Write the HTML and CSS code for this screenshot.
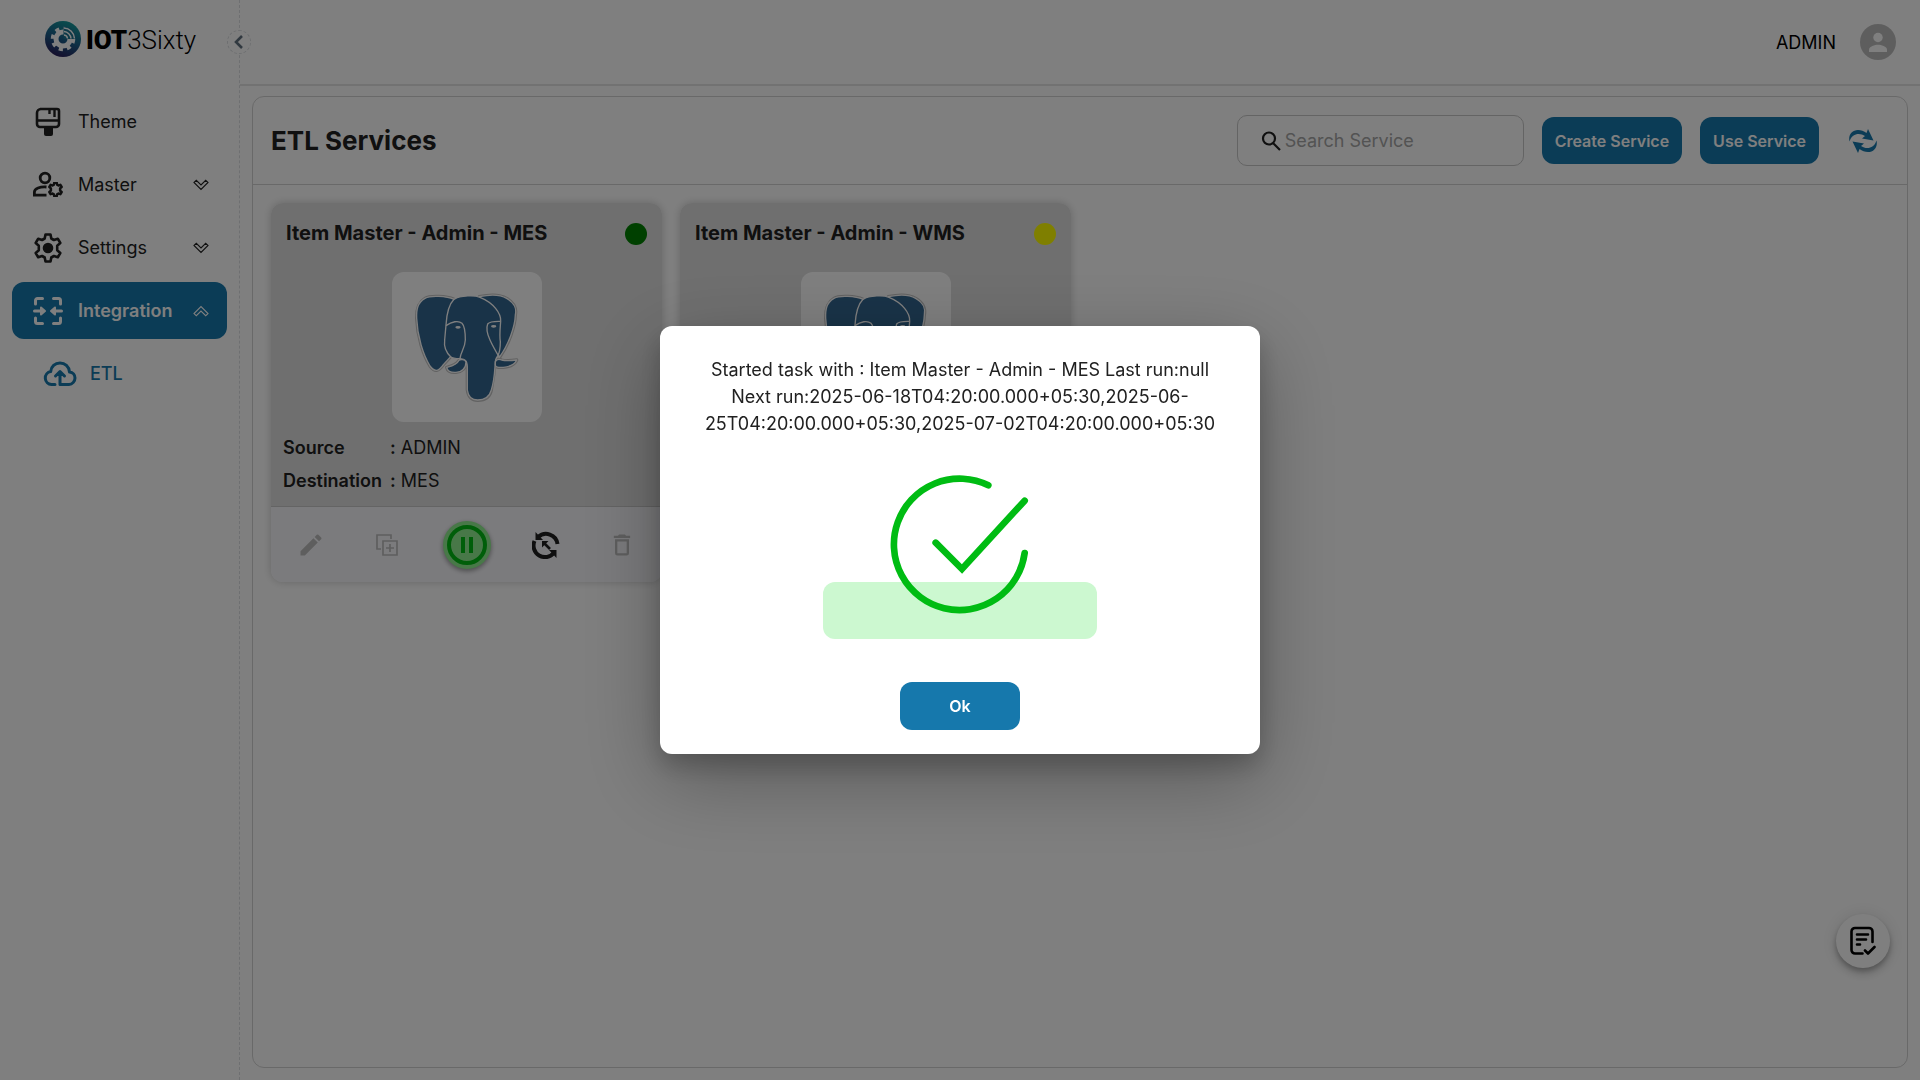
FILE: index.html
```html
<!DOCTYPE html>
<html lang="en">
  <head>
    <meta charset="utf-8">
    <title>ETL Services | IOT3Sixty</title>
    <meta name="viewport" content="width=device-width, initial-scale=1.0">
    <link rel="stylesheet" href="styles.css">
  </head>
  <body>
    <!-- shared shapes -->
    <svg class="defs" aria-hidden="true">
      <symbol id="chevron" viewBox="0 0 16 12">
        <path d="M1 3.400L3.300 1.300 8 6l4.700-4.700L15 3.400l-7 7z" fill="none" stroke="currentColor" stroke-width="1.100"/>
      </symbol>
      <symbol id="gear" viewBox="0 0 30 30">
        <path d="M12.500 1.500h5l.8 4 2.600 1.500 3.900-1.300 2.500 4.300-3.100 2.700v4.600l3.100 2.700-2.500 4.300-3.900-1.300-2.600 1.500-.8 4h-5l-.8-4L9.100 23l-3.900 1.300L2.700 20l3.100-2.700v-4.600L2.700 10l2.500-4.300L9.100 7l2.600-1.500z" fill="none" stroke="currentColor" stroke-linejoin="round"/>
      </symbol>
      <symbol id="elephant" viewBox="36 36 450 450">
        <g stroke="#c4c4c4" stroke-width="10" fill="#336791" stroke-linejoin="round">
          <path d="M222 118C200 108 150 106 135 115C112 128 109 150 110 175C112 230 130 285 150 318C164 337 176 335 190 314L212 290L300 200z"/>
          <path d="M298 110C330 103 360 103 380 115C405 130 410 145 406 165C405 200 385 255 360 290L300 200z"/>
          <path d="M262 300V390C265 410 272 421 293 421C315 421 330 412 334 390C340 360 343 340 345 300z"/>
          <path d="M200 322C215 318 230 315 236 302C240 297 255 297 258 306C258 325 245 336 228 337C213 338 203 335 200 322z"/>
          <path d="M346 305C350 297 358 297 365 300C380 304 395 302 410 300C405 312 390 320 370 322C355 323 346 322 346 315z"/>
        </g>
        <g stroke="#fff" stroke-width="4" fill="#336791" stroke-linejoin="round">
          <path d="M222 118C200 108 150 106 135 115C112 128 109 150 110 175C112 230 130 285 150 318C164 337 176 335 190 314L212 290L240 200z"/>
          <path d="M298 110C330 103 360 103 380 115C405 130 410 145 406 165C405 200 385 255 358 292L330 200z"/>
          <path d="M222 118C240 106 285 105 300 112C340 128 364 160 362 184C360 210 358 225 361 245C361 265 358 278 354 286C346 298 346 300 345 320C343 350 340 370 334 390C328 412 315 420 293 420C272 420 264 405 262 390V320C261 300 255 298 240 296C225 296 215 294 212 290C196 275 192 255 194 240L198 195C200 160 205 135 222 118z"/>
          <path d="M200 322C215 318 230 315 236 302C240 297 255 297 258 306C258 325 245 336 228 337C213 338 203 335 200 322z"/>
          <path d="M346 305C350 297 358 297 365 300C380 304 395 302 410 300C405 312 390 320 370 322C355 323 346 322 346 315z"/>
          <path d="M198 197C215 185 235 180 246 190C256 200 256 225 256 240C255 265 242 275 240 296" fill="none"/>
          <path d="M362 184C345 184 330 183 323 192C318 205 323 225 330 240C338 258 348 275 358 292" fill="none"/>
        </g>
        <ellipse cx="234" cy="202" rx="8" ry="4" fill="#fff"/>
        <ellipse cx="341" cy="199" rx="8" ry="4" fill="#fff"/>
      </symbol>
    </svg>

    <div class="layout">
      <aside class="sidebar">
        <a class="brand" href="#">
          <svg class="brand-mark" viewBox="0 0 36 36" aria-hidden="true">
            <defs>
              <linearGradient id="mark" x1=".7" y1="0" x2=".3" y2="1">
                <stop offset="0" stop-color="#159c9c"/>
                <stop offset=".5" stop-color="#1a5f8a"/>
                <stop offset="1" stop-color="#2b1a58"/>
              </linearGradient>
            </defs>
            <circle cx="18" cy="18" r="18" fill="url(#mark)"/>
            <circle cx="18" cy="18" r="10.500" fill="none" stroke="#fff" stroke-width="3.500" stroke-dasharray="4.100 4.147"/>
            <circle cx="18" cy="18" r="7" fill="none" stroke="#fff" stroke-width="5"/>
            <path d="M18.500 18V5.500A12.500 12.500 0 0 1 31 18z" fill="#1a7390"/>
            <path d="M19 7a11 11 0 0 1 10.500 10.500M19 10.500a7.500 7.500 0 0 1 7 7M19 14a4 4 0 0 1 3.500 3.500" fill="none" stroke="#fff" stroke-width="1.500"/>
          </svg>
          <span class="brand-name"><b>IOT</b>3Sixty</span>
        </a>
        <nav class="menu">
          <a class="menu-item" href="#">
            <svg class="menu-icon" viewBox="0 0 30 30" fill="none" stroke="currentColor" stroke-width="2.600" aria-hidden="true">
              <path d="M7 2h17a2 2 0 0 1 2 2v13a3 3 0 0 1-3 3H7a3 3 0 0 1-3-3V6a4 4 0 0 1 4-4zM4 13.500h22"/>
              <path d="M16.500 2v5M21.500 2v8" stroke-width="2.400"/>
              <path d="M11 20h9v7a2 2 0 0 1-2 2h-5a2 2 0 0 1-2-2z" fill="currentColor" stroke="none"/>
            </svg>
            <span>Theme</span>
          </a>
          <a class="menu-item" href="#">
            <svg class="menu-icon" viewBox="0 0 30 30" fill="none" stroke="currentColor" stroke-width="2.800" aria-hidden="true">
              <circle cx="12" cy="8" r="4.800"/>
              <path d="M13.500 17C7 16.500 1.400 18.500 1.400 22v3.200h12.100"/>
              <use href="#gear" x="15" y="12" width="15" height="15" stroke-width="5"/>
            </svg>
            <span>Master</span>
            <svg class="menu-arrow" aria-hidden="true"><use href="#chevron"/></svg>
          </a>
          <a class="menu-item" href="#">
            <svg class="menu-icon" viewBox="0 0 30 30" aria-hidden="true">
              <use href="#gear" stroke-width="2.600"/>
              <circle cx="15" cy="15" r="5.300" fill="currentColor"/>
            </svg>
            <span>Settings</span>
            <svg class="menu-arrow" aria-hidden="true"><use href="#chevron"/></svg>
          </a>
          <a class="menu-item active" href="#">
            <svg class="menu-icon" viewBox="0 0 30 30" fill="none" stroke="currentColor" stroke-width="3" stroke-linecap="round" aria-hidden="true">
              <path d="M9.500 2.500H4.500a2 2 0 0 0-2 2V8M20.500 2.500h5a2 2 0 0 1 2 2V8M9.500 27.500H4.500a2 2 0 0 1-2-2V22M20.500 27.500h5a2 2 0 0 0 2-2V22M1.500 15H9M28.500 15H21"/>
              <path d="M8 11.500l4 3.500-4 3.500zM22 11.500L18 15l4 3.500z" fill="currentColor" stroke-width="2" stroke-linejoin="round"/>
            </svg>
            <span>Integration</span>
            <svg class="menu-arrow up" aria-hidden="true"><use href="#chevron"/></svg>
          </a>
          <a class="menu-item sub" href="#">
            <svg class="sub-icon" viewBox="0 0 34 26" fill="none" stroke="currentColor" stroke-width="3" stroke-linecap="round" stroke-linejoin="round" aria-hidden="true">
              <path d="M12 23.500H8.500a6.500 6.500 0 0 1-.8-12.900C8 5.500 12 2 17 2s9 3.500 9.500 9c3.500.3 5.500 3 5.500 6s-2.500 6.500-6 6.500h-9V10.500M12.500 15l4.500-4.500 4.500 4.500"/>
            </svg>
            <span>ETL</span>
          </a>
        </nav>
      </aside>

      <div class="page">
        <header class="topbar">
          <button class="collapse" type="button" aria-label="Collapse menu">
            <svg viewBox="0 0 12 14" aria-hidden="true"><path d="M9 1L3 7l6 6" fill="none" stroke="currentColor" stroke-width="2.600"/></svg>
          </button>
          <span class="user">ADMIN</span>
          <svg class="avatar" viewBox="0 0 36 36" role="img" aria-label="Profile">
            <circle cx="18" cy="18" r="18" fill="#bdbdbd"/>
            <circle cx="18" cy="13.500" r="4.700" fill="#fff"/>
            <path d="M9 28v-2.500c0-3 6-4.700 9-4.700s9 1.700 9 4.700V28z" fill="#fff"/>
          </svg>
        </header>

        <main class="panel">
          <div class="panel-head">
            <h1>ETL Services</h1>
            <label class="search">
              <svg viewBox="0 0 20 20" aria-hidden="true"><path d="M12.500 12.500L19 19M14 7.500a6 6 0 1 1-12 0 6 6 0 0 1 12 0z" fill="none" stroke="currentColor" stroke-width="2.200"/></svg>
              <input type="text" placeholder="Search Service" aria-label="Search Service">
            </label>
            <button class="btn" type="button">Create Service</button>
            <button class="btn" type="button">Use Service</button>
            <button class="refresh" type="button" aria-label="Refresh">
              <svg viewBox="0 0 28 24" fill="currentColor" aria-hidden="true">
                <path d="M.5 12.500C-1 6 3 1 9 1c3 0 6 1 8.500 3L19 0l5.500 11.500L13 9.500 16 7C11 3.500 3 4 .5 12.500z"/>
                <path d="M27.500 11.500C29 18 25 23 19 23c-3 0-6-1-8.500-3L9 24 3.500 12.500 15 14.500 12 17c5 3.500 13 3 15.500-5.500z"/>
              </svg>
            </button>
          </div>

          <div class="cards">
            <article class="card">
              <div class="card-body">
                <div class="card-title">
                  <h2>Item Master - Admin - MES</h2>
                  <span class="status running"></span>
                </div>
                <svg class="card-logo" aria-hidden="true"><use href="#elephant"/></svg>
                <dl>
                  <dt>Source</dt><dd><b>:</b> ADMIN</dd>
                  <dt>Destination</dt><dd><b>:</b> MES</dd>
                </dl>
              </div>
              <div class="card-actions">
                <button type="button" aria-label="Edit" disabled>
                  <svg width="28" height="28" viewBox="0 0 24 24" fill="currentColor"><path d="M3 17.250V21h3.750L17.810 9.940l-3.750-3.750zM20.710 7.040a1 1 0 0 0 0-1.410l-2.340-2.340a1 1 0 0 0-1.410 0l-1.830 1.830 3.750 3.750z"/></svg>
                </button>
                <button type="button" aria-label="Duplicate" disabled>
                  <svg width="22" height="22" viewBox="0 0 22 22" fill="none" stroke="currentColor" stroke-width="1.700"><path d="M5 15H1V1h14v4M7 7h14v14H7zM14 10v8M10 14h8"/></svg>
                </button>
                <button class="pause" type="button" aria-label="Pause">
                  <svg width="40" height="40" viewBox="0 0 40 40" fill="none" stroke="currentColor" stroke-width="4"><circle cx="20" cy="20" r="18"/><path d="M16 12v16M24 12v16"/></svg>
                </button>
                <button class="rerun" type="button" aria-label="Run again">
                  <svg width="28" height="28" viewBox="0 0 28 28" fill="none" stroke="currentColor" stroke-width="4"><path d="M6 6.200A11.500 11.500 0 0 1 25.500 13M22 21.800A11.500 11.500 0 0 1 2.500 10"/><path d="M25.500 12v4M3.500 1v8H11zM24.500 27v-8H17zM10 10h6.500L10 16.500z" fill="currentColor" stroke="none"/><path d="M12 12l6 6" stroke-width="2.600"/></svg>
                </button>
                <button type="button" aria-label="Delete" disabled>
                  <svg width="28" height="28" viewBox="0 0 24 24" fill="currentColor"><path fill-rule="evenodd" d="M6 19a2 2 0 0 0 2 2h8a2 2 0 0 0 2-2V7H6zM8 9h8v10H8zM15.500 4l-1-1h-5l-1 1H5v2h14V4z"/></svg>
                </button>
              </div>
            </article>

            <article class="card">
              <div class="card-body">
                <div class="card-title">
                  <h2>Item Master - Admin - WMS</h2>
                  <span class="status waiting"></span>
                </div>
                <svg class="card-logo" aria-hidden="true"><use href="#elephant"/></svg>
              </div>
              <div class="card-actions"></div>
            </article>
          </div>
        </main>
      </div>
    </div>

    <button class="fab" type="button" aria-label="Tasks">
      <svg width="26" height="30" viewBox="0 0 26 30" fill="none" stroke="currentColor" stroke-width="2.600" stroke-linecap="round" stroke-linejoin="round" aria-hidden="true">
        <path d="M12.500 27.500H5A3.500 3.500 0 0 1 1.500 24V5.500A3.500 3.500 0 0 1 5 2h14a3.500 3.500 0 0 1 3.500 3.500V16M7 8.500h11M7 13.500h9M7 18.500h3M15 24.500l3 3 6.500-6.500"/>
      </svg>
    </button>

    <div class="overlay">
      <div class="dialog" role="dialog" aria-modal="true" aria-describedby="message">
        <p id="message">Started task with : Item Master - Admin - MES Last run:null<br>Next run:2025-06-18T04:20:00.000+05:30,2025-06-25T04:20:00.000+05:30,2025-07-02T04:20:00.000+05:30</p>
        <svg class="tick" viewBox="270 73 420 420" fill="none" stroke="#00bc13" stroke-width="20" stroke-linecap="round" aria-hidden="true">
          <path d="M565 104A197 197 0 1 0 674 307"/>
          <path d="M407 276l79 79 188-205"/>
        </svg>
        <div class="tick-base"></div>
        <button class="btn ok" type="button">Ok</button>
      </div>
    </div>
  </body>
</html>
```
FILE: styles.css
```css
* {
  box-sizing: border-box;
  margin: 0;
  padding: 0; }

body {
  background: #fff;
  color: #212121;
  font-family: Inter, "Liberation Sans", sans-serif;
  font-size: 18px;
  line-height: 27px; }

a {
  color: inherit;
  text-decoration: none; }

button {
  border: none;
  background: none;
  color: inherit;
  font-family: inherit;
  cursor: pointer; }

svg {
  display: block;
  flex: none; }

.defs {
  width: 0;
  height: 0;
  position: absolute; }

.layout {
  display: flex;
  min-height: 100vh; }

/* sidebar */
.sidebar {
  width: 240px;
  flex: none;
  padding: 0 12px;
  border-right: 1px dashed #dcdfe2; }

.brand {
  display: flex;
  align-items: center;
  gap: 5px;
  height: 77px;
  margin-bottom: 16px;
  padding-left: 33px;
  color: #000; }

.brand-mark {
  width: 36px;
  height: 36px; }

.brand-name {
  padding-top: 3px;
  font-family: Roboto, sans-serif;
  font-size: 26px;
  font-weight: 300; }
  .brand-name b {
    font-weight: 900; }

.menu {
  display: flex;
  flex-direction: column;
  gap: 6px; }

.menu-item {
  display: flex;
  align-items: center;
  height: 57px;
  padding: 0 18px 0 21px;
  border-radius: 12px; }
  .menu-item span {
    flex: 1; }
  .menu-item.active {
    background: #1678ac;
    color: #fff;
    font-weight: 600; }
  .menu-item.sub {
    padding-left: 31px;
    color: #1678ac;
    font-weight: 500; }

.menu-icon {
  width: 30px;
  height: 30px;
  margin-right: 15px; }

.sub-icon {
  width: 34px;
  height: 26px;
  margin-right: 13px; }

.menu-arrow {
  width: 16px;
  height: 12px; }
  .menu-arrow.up {
    transform: rotate(180deg); }

/* top bar */
.page {
  flex: 1;
  min-width: 0;
  display: flex;
  flex-direction: column; }

.topbar {
  position: relative;
  display: flex;
  align-items: center;
  justify-content: flex-end;
  gap: 24px;
  height: 86px;
  padding-right: 24px;
  border-bottom: 2px solid #e4e4e4; }

.collapse {
  position: absolute;
  left: -13px;
  top: 30px;
  display: flex;
  align-items: center;
  justify-content: center;
  width: 24px;
  height: 24px;
  border: 1px dashed #dcdfe2;
  border-radius: 50%;
  background: #fff;
  color: #637381; }
  .collapse svg {
    width: 12px;
    height: 14px; }

.user {
  color: #000; }

.avatar {
  width: 36px;
  height: 36px; }

/* main panel */
.panel {
  flex: 1;
  margin: 10px 12px 12px;
  border: 1px solid #d3d3d3;
  border-radius: 12px; }

.panel-head {
  display: flex;
  align-items: center;
  gap: 18px;
  height: 88px;
  padding: 0 18px;
  border-bottom: 1px solid #d3d3d3; }
  .panel-head h1 {
    flex: 1;
    font-size: 26px;
    font-weight: 700; }

.search {
  display: flex;
  align-items: center;
  gap: 4px;
  width: 287px;
  height: 51px;
  padding: 0 14px 0 23px;
  border: 1px solid #c8c8c8;
  border-radius: 10px; }
  .search svg {
    width: 20px;
    height: 20px; }
  .search input {
    width: 100%;
    border: none;
    outline: none;
    background: none;
    font: inherit; }
  .search input::placeholder {
    color: #a6a6a6; }

.btn {
  height: 47px;
  padding: 0 13px;
  border-radius: 12px;
  background: #1678ac;
  color: #fff;
  font-size: 16px;
  font-weight: 600; }

.refresh {
  padding: 12px;
  color: #1678ac; }
  .refresh svg {
    width: 28px;
    height: 24px; }

/* service cards */
.cards {
  display: flex;
  flex-wrap: wrap;
  gap: 18px;
  padding: 18px; }

.card {
  width: 391px;
  border-radius: 12px;
  box-shadow: 0 0 8px rgba(0, 0, 0, 0.2);
  overflow: hidden; }

.card-body {
  min-height: 304px;
  padding: 0 12px 9px;
  border-bottom: 1px solid #c8c8c8;
  background: #dfdfdf; }

.card-title {
  display: flex;
  align-items: center;
  justify-content: space-between;
  height: 61px;
  padding: 0 3px; }
  .card-title h2 {
    font-size: 20px;
    font-weight: 700; }

.status {
  width: 22px;
  height: 22px;
  border-radius: 50%; }
  .status.running {
    background: green; }
  .status.waiting {
    background: yellow; }

.card-logo {
  width: 150px;
  height: 150px;
  margin: 8px auto 9px;
  border-radius: 12px;
  background: #fff; }

.card dl {
  display: grid;
  grid-template-columns: 107px 1fr;
  line-height: 33px; }
  .card dt, .card b {
    font-weight: 600; }

.card-actions {
  display: flex;
  align-items: center;
  justify-content: space-between;
  height: 75px;
  padding: 0 20px;
  background: #f7f7fb; }
  .card-actions button {
    display: flex;
    align-items: center;
    justify-content: center;
    width: 40px;
    height: 40px;
    border-radius: 50%; }
  .card-actions button:disabled {
    color: #bdbdbd; }
  .card-actions .pause {
    width: 48px;
    height: 48px;
    background: #90f090;
    color: #00bc13;
    box-shadow: 0 2px 5px rgba(0, 0, 0, 0.4); }

.fab {
  position: fixed;
  right: 30px;
  bottom: 112px;
  display: flex;
  align-items: center;
  justify-content: center;
  width: 54px;
  height: 54px;
  border-radius: 50%;
  background: #fff;
  color: #000;
  box-shadow: 0 3px 5px rgba(0, 0, 0, 0.2), 0 6px 10px rgba(0, 0, 0, 0.14), 0 1px 18px rgba(0, 0, 0, 0.12); }

/* message dialog */
.overlay {
  position: fixed;
  top: 0;
  right: 0;
  bottom: 0;
  left: 0;
  display: flex;
  align-items: center;
  justify-content: center;
  background: rgba(0, 0, 0, 0.5); }

.dialog {
  display: flex;
  flex-direction: column;
  align-items: center;
  width: 600px;
  padding: 30px 40px 24px;
  border-radius: 12px;
  background: #fff;
  text-align: center;
  box-shadow: 0 12px 24px rgba(0, 0, 0, 0.2), 0 24px 80px rgba(0, 0, 0, 0.3); }

.tick {
  position: relative;
  width: 140px;
  height: 140px;
  margin-top: 38px; }

.tick-base {
  width: 274px;
  height: 57px;
  margin-top: -33px;
  border-radius: 12px;
  background: #ccf8d0; }

.ok {
  width: 120px;
  height: 48px;
  margin-top: 43px; }
```
